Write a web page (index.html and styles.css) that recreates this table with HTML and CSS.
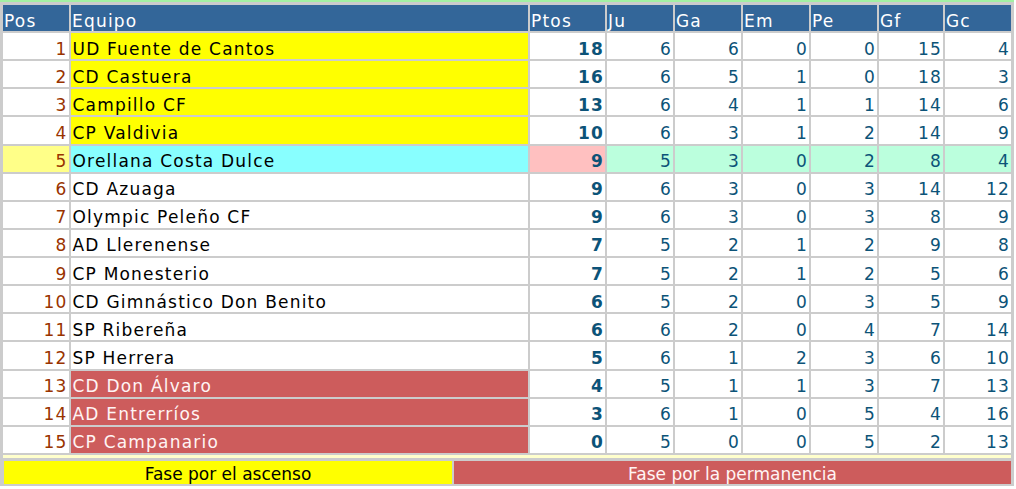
FILE: index.html
```html
<!DOCTYPE html>
<html lang="es">
<head>
<meta charset="utf-8">
<title>Clasificación</title>
<link rel="stylesheet" href="styles.css">
</head>
<body>
<div class="board">
  <table class="standings">
    <colgroup>
      <col class="c-pos"><col class="c-team"><col class="c-pts"><col class="c-n"><col class="c-n"><col class="c-n"><col class="c-n"><col class="c-gf"><col class="c-n">
    </colgroup>
    <thead>
      <tr><th>Pos</th><th>Equipo</th><th>Ptos</th><th>Ju</th><th>Ga</th><th>Em</th><th>Pe</th><th>Gf</th><th>Gc</th></tr>
    </thead>
    <tbody>
      <tr class="up"><td class="pos">1</td><td class="team">UD Fuente de Cantos</td><td class="pts">18</td><td class="num">6</td><td class="num">6</td><td class="num">0</td><td class="num">0</td><td class="num">15</td><td class="num">4</td></tr>
      <tr class="up"><td class="pos">2</td><td class="team">CD Castuera</td><td class="pts">16</td><td class="num">6</td><td class="num">5</td><td class="num">1</td><td class="num">0</td><td class="num">18</td><td class="num">3</td></tr>
      <tr class="up"><td class="pos">3</td><td class="team">Campillo CF</td><td class="pts">13</td><td class="num">6</td><td class="num">4</td><td class="num">1</td><td class="num">1</td><td class="num">14</td><td class="num">6</td></tr>
      <tr class="up"><td class="pos">4</td><td class="team">CP Valdivia</td><td class="pts">10</td><td class="num">6</td><td class="num">3</td><td class="num">1</td><td class="num">2</td><td class="num">14</td><td class="num">9</td></tr>
      <tr class="mine"><td class="pos">5</td><td class="team">Orellana Costa Dulce</td><td class="pts">9</td><td class="num">5</td><td class="num">3</td><td class="num">0</td><td class="num">2</td><td class="num">8</td><td class="num">4</td></tr>
      <tr><td class="pos">6</td><td class="team">CD Azuaga</td><td class="pts">9</td><td class="num">6</td><td class="num">3</td><td class="num">0</td><td class="num">3</td><td class="num">14</td><td class="num">12</td></tr>
      <tr><td class="pos">7</td><td class="team">Olympic Peleño CF</td><td class="pts">9</td><td class="num">6</td><td class="num">3</td><td class="num">0</td><td class="num">3</td><td class="num">8</td><td class="num">9</td></tr>
      <tr><td class="pos">8</td><td class="team">AD Llerenense</td><td class="pts">7</td><td class="num">5</td><td class="num">2</td><td class="num">1</td><td class="num">2</td><td class="num">9</td><td class="num">8</td></tr>
      <tr><td class="pos">9</td><td class="team">CP Monesterio</td><td class="pts">7</td><td class="num">5</td><td class="num">2</td><td class="num">1</td><td class="num">2</td><td class="num">5</td><td class="num">6</td></tr>
      <tr><td class="pos">10</td><td class="team">CD Gimnástico Don Benito</td><td class="pts">6</td><td class="num">5</td><td class="num">2</td><td class="num">0</td><td class="num">3</td><td class="num">5</td><td class="num">9</td></tr>
      <tr><td class="pos">11</td><td class="team">SP Ribereña</td><td class="pts">6</td><td class="num">6</td><td class="num">2</td><td class="num">0</td><td class="num">4</td><td class="num">7</td><td class="num">14</td></tr>
      <tr><td class="pos">12</td><td class="team">SP Herrera</td><td class="pts">5</td><td class="num">6</td><td class="num">1</td><td class="num">2</td><td class="num">3</td><td class="num">6</td><td class="num">10</td></tr>
      <tr class="down"><td class="pos">13</td><td class="team">CD Don Álvaro</td><td class="pts">4</td><td class="num">5</td><td class="num">1</td><td class="num">1</td><td class="num">3</td><td class="num">7</td><td class="num">13</td></tr>
      <tr class="down"><td class="pos">14</td><td class="team">AD Entrerríos</td><td class="pts">3</td><td class="num">6</td><td class="num">1</td><td class="num">0</td><td class="num">5</td><td class="num">4</td><td class="num">16</td></tr>
      <tr class="down"><td class="pos">15</td><td class="team">CP Campanario</td><td class="pts">0</td><td class="num">5</td><td class="num">0</td><td class="num">0</td><td class="num">5</td><td class="num">2</td><td class="num">13</td></tr>
      <tr class="spacer"><td colspan="9"></td></tr>
    </tbody>
  </table>
  <div class="legend">
    <div class="leg leg-up">Fase por el ascenso</div>
    <div class="leg leg-down">Fase por la permanencia</div>
  </div>
</div>
</body>
</html>
```
FILE: styles.css
```css
html, body {
  margin: 0;
  padding: 0;
  background: #ffffff;
}

body {
  font-family: "DejaVu Sans", Verdana, sans-serif;
  font-size: 17px;
}

.board {
  width: 1012px;
  background: #cccccc;
  border-top: 2px solid #a3f0a3;
  padding: 1px 1px 2px 1px;
}

.standings {
  width: 1012px;
  table-layout: fixed;
  border-collapse: separate;
  border-spacing: 2px;
  background: #cccccc;
}

.c-pos { width: 66px; }
.c-team { width: 457px; }
.c-pts { width: 75px; }
.c-n { width: 66px; }
.c-gf { width: 64px; }

.standings th,
.standings td {
  padding: 5.5px 2px 0 2px;
  line-height: 20.63px;
  letter-spacing: 1.2px;
  white-space: nowrap;
  overflow: hidden;
}

.standings th {
  background: #336699;
  color: #ffffff;
  font-weight: normal;
  text-align: left;
  line-height: 20.5px;
  padding-left: 1px;
}

.standings td {
  background: #ffffff;
}

.standings td.pos {
  text-align: right;
  color: #993300;
  padding-right: 1.5px;
}

.standings td.team {
  color: #000000;
  padding-left: 1.5px;
}

.standings td.pts,
.standings td.num {
  text-align: right;
  color: #0c5378;
  padding-right: 1px;
}

.standings td.pts {
  font-weight: bold;
}

.up td.team { background: #ffff00; }

.mine td.pos { background: #ffff88; }
.mine td.team { background: #88ffff; }
.mine td.pts { background: #ffc0c0; }
.mine td.num { background: #bbffdd; }

.down td.team {
  background: #cd5c5c;
  color: #fff4f4;
}

.standings tr.spacer td {
  background: #ffffcc;
  height: 3.5px;
  padding: 0;
  line-height: 0;
  font-size: 0;
}

.legend {
  display: flex;
  gap: 2px;
  margin: 1px 2px 0 3px;
}

.leg {
  height: 23px;
  box-sizing: border-box;
  padding-top: 3.2px;
  line-height: 19.8px;
  text-align: center;
}

.leg-up {
  width: 448px;
  background: #ffff00;
  color: #000000;
}

.leg-down {
  flex: 1;
  background: #cd5c5c;
  color: #fff4f4;
}
```
